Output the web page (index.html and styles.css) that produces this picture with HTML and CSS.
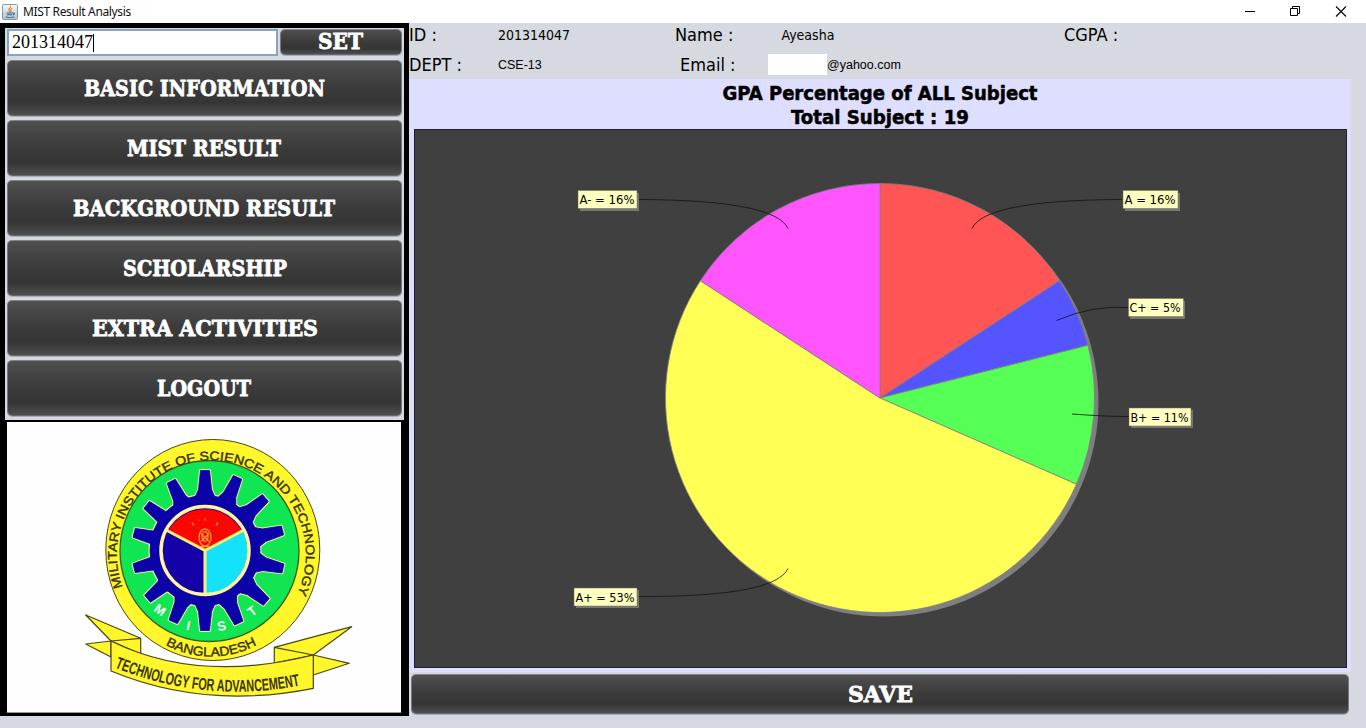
FILE: index.html
```
<!DOCTYPE html>
<html lang="en">
<head>
<meta charset="utf-8">
<title>MIST Result Analysis</title>
<link rel="stylesheet" href="styles.css">
</head>
<body>
<header class="titlebar">
  <svg class="java-icon" width="16" height="16" viewBox="0 0 16 16">
    <defs><linearGradient id="jb" x1="0" y1="0" x2="0" y2="1"><stop offset="0" stop-color="#f7f9fb"/><stop offset="1" stop-color="#a9bfd3"/></linearGradient></defs>
    <rect x=".5" y=".5" width="15" height="15" rx="1" fill="url(#jb)" stroke="#8198ad"/>
    <path d="M8.3 2c1.4 1.5-2.8 2.6-1.2 4.6.4.6.8.9.9 1.6M10.3 4.2C8.6 5 8 5.6 8.8 6.6c.4.6.2 1-.2 1.4" fill="none" stroke="#e8862c" stroke-width="1.2"/>
    <path d="M4.5 9h6M5 10.8h5M10.6 9c2.400-.5 2 1.700 0 2M4 12.800c2 1 6 1 8 0" fill="none" stroke="#3f6285" stroke-width="1.100"/>
  </svg>
  <span class="caption">MIST Result Analysis</span>
  <svg class="controls" width="110" height="20" viewBox="0 0 110 20" fill="none" stroke="#000">
    <path d="M5 9.500h10M50.500 6.500h7v7h-7zM52.500 6.500v-2h7v7h-2"/>
    <path d="M96 4.500l10 10M106 4.500l-10 10" stroke-width="1.100"/>
  </svg>
</header>
<main class="window">
  <aside class="sidebar">
    <section class="menu">
      <div class="search">
        <div class="field"><span>201314047</span><i class="caret"></i></div>
        <button class="btn set"><svg width="46" height="26"><text x="0" y="20" textLength="45" lengthAdjust="spacingAndGlyphs">SET</text></svg></button>
      </div>
      <button class="btn"><svg width="241" height="30"><text x="0" y="23" textLength="241" lengthAdjust="spacingAndGlyphs">BASIC INFORMATION</text></svg></button>
      <button class="btn"><svg width="154" height="30"><text x="-1" y="23" textLength="154" lengthAdjust="spacingAndGlyphs">MIST RESULT</text></svg></button>
      <button class="btn"><svg width="262" height="30"><text x="-1" y="23" textLength="262" lengthAdjust="spacingAndGlyphs">BACKGROUND RESULT</text></svg></button>
      <button class="btn"><svg width="164" height="30"><text x="0" y="23" textLength="164" lengthAdjust="spacingAndGlyphs">SCHOLARSHIP</text></svg></button>
      <button class="btn"><svg width="226" height="30"><text x="0" y="23" textLength="226" lengthAdjust="spacingAndGlyphs">EXTRA ACTIVITIES</text></svg></button>
      <button class="btn"><svg width="94" height="30"><text x="-1" y="23" textLength="94" lengthAdjust="spacingAndGlyphs">LOGOUT</text></svg></button>
    </section>
    <section class="crest">
      <svg width="394" height="291" viewBox="7 422 394 291">
        <defs>
          <path id="tooth" d="M-11 -51L-6.500 -61L-4.500 -80H4.500L6.500 -61L11 -51Z"/>
          <g id="gear">
            <circle r="55"/>
            <use href="#tooth"/>
            <use href="#tooth" transform="rotate(24)"/>
            <use href="#tooth" transform="rotate(49)"/>
            <use href="#tooth" transform="rotate(75.500)"/>
            <use href="#tooth" transform="rotate(103)"/>
            <use href="#tooth" transform="rotate(130)"/>
            <use href="#tooth" transform="rotate(155)"/>
            <use href="#tooth" transform="rotate(180)"/>
            <use href="#tooth" transform="rotate(204) translate(0 2)"/>
            <use href="#tooth" transform="rotate(230) translate(0 5)"/>
            <use href="#tooth" transform="rotate(256) translate(0 7)"/>
            <use href="#tooth" transform="rotate(284) translate(0 7)"/>
            <use href="#tooth" transform="rotate(308) translate(0 6)"/>
            <use href="#tooth" transform="rotate(334) translate(0 3)"/>
          </g>
          <path id="arcTop" d="M122.500 587A94.500 94.500 0 1 1 299 590"/>
          <path id="arcBottom" d="M165.500 645A95.700 95.700 0 0 0 260 643"/>
          <path id="arcRibbon" d="M114.500 667.500Q205 704 300 685.500"/>
        </defs>
        <ellipse cx="212.800" cy="550" rx="107" ry="110.500" fill="#fff72a" stroke="#4a4718" stroke-width="1"/>
        <ellipse cx="209.500" cy="551" rx="89.500" ry="90.500" fill="#10e552" stroke="#3c5a18" stroke-width="1.300"/>
        <g transform="translate(205 550.500)">
          <use href="#gear" fill="#e9efa0" stroke="#e9efa0" stroke-width="3" stroke-linejoin="round"/>
          <use href="#gear" fill="#0b02a8" stroke="#0b02a8" stroke-width=".8"/>
          <circle r="45" fill="#1402a8"/>
          <path d="M0 1L-37 -19A42 42 0 0 1 37 -19Z" fill="#fb0600"/>
          <path d="M0 0L38 -19A43 43 0 0 1 0 43Z" fill="#14e2fb"/>
          <path d="M0 44V0L-38 -20M0 0L38 -20" fill="none" stroke="#ffef72" stroke-width="3"/>
          <circle r="44" fill="none" stroke="#fff4a0" stroke-width="3.500"/>
          <g fill="none" stroke="#ff9b35" stroke-width="1.300">
            <ellipse cx="0" cy="-13" rx="6" ry="8.500"/><ellipse cx="0" cy="-14" rx="3" ry="5"/>
            <path d="M-4 -9L4 -17M-4 -17L4 -9M-4 -4H4M-13 -28l2 3M13 -28l-2 3M-6 -31v1M0 -32v2"/>
          </g>
        </g>
        <g class="ring-text">
          <text font-size="12.500"><textPath href="#arcTop" textLength="370" lengthAdjust="spacingAndGlyphs">MILITARY INSTITUTE OF SCIENCE AND TECHNOLOGY</textPath></text>
          <text font-size="13"><textPath href="#arcBottom" textLength="95" lengthAdjust="spacingAndGlyphs">BANGLADESH</textPath></text>
        </g>
        <g class="initials">
          <text transform="translate(160 610) rotate(35)" y="4.500">M</text>
          <text transform="translate(188.500 625.500) rotate(12)" y="4.500">I</text>
          <text transform="translate(221.500 626) rotate(-12)" y="4.500">S</text>
          <text transform="translate(252 611) rotate(-38)" y="4.500">T</text>
        </g>
        <g fill="#fff72a" stroke="#4a4718" stroke-width="1.200" stroke-linejoin="round">
          <path d="M111 641L85.700 644L111 657Z"/>
          <path d="M85.700 615L140.700 638.300V654L111 641Z"/>
          <path d="M111 641L140.700 638.300" />
          <path d="M313.300 655L349.300 663.300L313.300 675Z"/>
          <path d="M274.300 647.300L351.700 626.700L313.300 655L274.300 663Z"/>
          <path d="M274.300 647.300L313.300 655"/>
          <path d="M111 641Q198 684 313.300 655V688.300Q205 710 111 671Z"/>
        </g>
        <text class="motto"><textPath href="#arcRibbon" textLength="189" lengthAdjust="spacingAndGlyphs">TECHNOLOGY FOR ADVANCEMENT</textPath></text>
      </svg>
    </section>
  </aside>
  <section class="content">
    <div class="info">
      <span class="key">ID :</span><span class="val">201314047</span><span class="key">Name :</span><span class="val">Ayeasha</span><span class="key">CGPA :</span>
      <span class="key">DEPT :</span><span class="val small">CSE-13</span><span class="key email-key">Email :</span><span class="val small mail"><i class="mask"></i>@yahoo.com</span>
    </div>
    <div class="chart">
      <svg width="942" height="593" viewBox="409 79 942 593">
        <g class="title">
          <text x="722.500" y="100" textLength="315" lengthAdjust="spacingAndGlyphs">GPA Percentage of ALL Subject</text>
          <text x="791" y="124" textLength="178" lengthAdjust="spacingAndGlyphs">Total Subject : 19</text>
        </g>
        <rect x="414.500" y="129.500" width="932" height="538" fill="#404040" stroke="#20202c"/>
        <circle cx="884" cy="402" r="214.500" fill="#7f7f7f"/>
        <g stroke="#808080" stroke-width=".8" stroke-linejoin="round">
          <path d="M880 398V183.500A214.500 214.500 0 0 1 1059.600 280.700Z" fill="#ff5555"/>
          <path d="M880 398L1059.600 280.700A214.500 214.500 0 0 1 1088 345.300Z" fill="#5555ff"/>
          <path d="M880 398L1088 345.300A214.500 214.500 0 0 1 1076.400 484.200Z" fill="#55ff55"/>
          <path d="M880 398L1076.400 484.200A214.500 214.500 0 1 1 700.400 280.700Z" fill="#ffff55"/>
          <path d="M880 398L700.400 280.700A214.500 214.500 0 0 1 880 183.500Z" fill="#ff55ff"/>
        </g>
        <g fill="none" stroke="#111" stroke-width=".8">
          <path d="M638 199.500Q775 200 788 228.500"/>
          <path d="M1122 199.500Q985 200 972 228.500"/>
          <path d="M1128 307.500Q1092 305 1056.500 320.500"/>
          <path d="M1129 416.500Q1105 416.500 1072 414"/>
          <path d="M638 596.500Q775 597 788 568.500"/>
        </g>
        <g fill="#777770">
          <rect x="580" y="193" width="59" height="18"/><rect x="1125" y="193" width="55" height="18"/><rect x="1130" y="301" width="55" height="18"/><rect x="1131" y="410" width="62" height="18"/><rect x="576" y="590" width="63" height="18"/>
        </g>
        <g fill="#ffffc0" stroke="#6d6d50" stroke-width=".5">
          <rect x="578" y="190.500" width="59" height="18"/><rect x="1123" y="190.500" width="55" height="18"/><rect x="1128.500" y="298.500" width="55" height="18"/><rect x="1129" y="408" width="62" height="18"/><rect x="574" y="588" width="63" height="18"/>
        </g>
        <g class="labels">
          <text x="579.500" y="204" textLength="55" lengthAdjust="spacingAndGlyphs">A- = 16%</text>
          <text x="1124.500" y="204" textLength="51" lengthAdjust="spacingAndGlyphs">A = 16%</text>
          <text x="1129.500" y="312" textLength="51" lengthAdjust="spacingAndGlyphs">C+ = 5%</text>
          <text x="1130.500" y="422" textLength="58" lengthAdjust="spacingAndGlyphs">B+ = 11%</text>
          <text x="575.500" y="602" textLength="59" lengthAdjust="spacingAndGlyphs">A+ = 53%</text>
        </g>
      </svg>
    </div>
    <button class="btn save"><svg width="65" height="30"><text x="0" y="23" textLength="65" lengthAdjust="spacingAndGlyphs">SAVE</text></svg></button>
  </section>
</main>
</body>
</html>
```
FILE: styles.css
```
* { box-sizing: border-box; }
body { margin: 0; width: 1366px; height: 728px; overflow: hidden; background: #d6d9df; font-family: "DejaVu Sans Condensed", "DejaVu Sans", sans-serif; color: #000; }
svg { display: block; }
.titlebar { height: 23px; background: #fff; display: flex; align-items: center; padding-left: 2px; }
.java-icon { margin-top: 1px; }
.caption { margin-left: 5px; font: 12px "Noto Sans", sans-serif; letter-spacing: -.35px; color: #111; }
.controls { margin-left: auto; margin-right: 16px; }
.window { display: flex; height: 705px; align-items: flex-start; }
.sidebar { width: 409px; height: 693px; background: #000; padding: 5px; }
.menu { width: 399px; height: 392px; background: #d6d9df; padding: 1px 2px; display: flex; flex-direction: column; gap: 4px; }
.search { display: flex; gap: 2px; height: 27px; }
.field { width: 271px; height: 27px; background: #fff; border: 2px solid #86a5c2; padding-left: 3px; display: flex; align-items: center; font: 18px "Liberation Serif", serif; }
.caret { width: 1px; height: 18px; background: #000; }
.btn { font: inherit; height: 56px; width: 395px; flex: none; padding: 0; border: 1px solid; border-color: #81858b #777b80 #66696d; border-radius: 5px; display: flex; align-items: center; justify-content: center; background: linear-gradient(#505050, #454545 24%, #3b3b3b 50%, #353535 77%, #4f4f51); box-shadow: 0 1px #a9acb2; }
.btn text { font: bold 22px "DejaVu Serif", serif; fill: #fff; stroke: #fff; stroke-width: .8px; }
.btn svg { overflow: visible; }
.set { width: 122px; height: 26px; }
.crest { width: 394px; height: 291px; margin: 2px 0 0 2px; background: #fefefe; border-bottom: 1px solid #999; overflow: hidden; }
.ring-text { font-family: "Liberation Sans", sans-serif; fill: #37330b; stroke: #37330b; stroke-width: .4px; }
.initials { font: bold 13px "Liberation Sans", sans-serif; fill: #fff; text-anchor: middle; }
.motto { font: bold 17px "Liberation Sans", sans-serif; fill: #3a350b; }
.content { width: 942px; }
.info { height: 56px; display: grid; grid-template-columns: 89px 177px 106.500px 282.500px 1fr; grid-template-rows: 23px 37px; align-items: center; white-space: nowrap; }
.key { font-size: 18px; line-height: 20px; }
.val { font-size: 14px; line-height: 20px; }
.email-key { padding-left: 5px; }
.small { font: 12.500px "Liberation Sans", sans-serif; }
.mail { display: flex; align-items: center; margin-left: -13.500px; }
.mask { width: 59px; height: 21px; background: #fff; }
.chart { height: 593px; background: #dedeff; }
.title { font: bold 20px "DejaVu Sans Condensed", "DejaVu Sans", sans-serif; stroke: #000; stroke-width: .5px; }
.labels { font: 12px "DejaVu Sans Condensed", "DejaVu Sans", sans-serif; }
.save { width: 938px; height: 40px; margin: 2px 0 0 2px; }
```
